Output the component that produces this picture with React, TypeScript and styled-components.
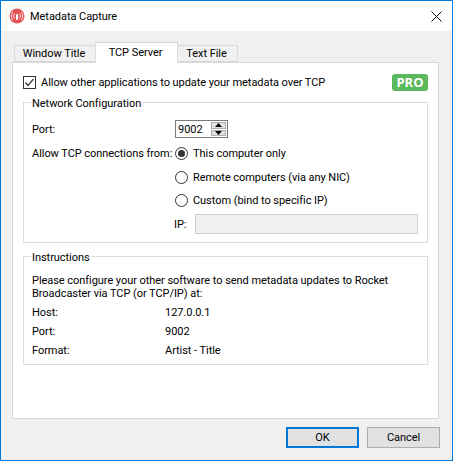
import React from 'react';
import styled, { createGlobalStyle } from 'styled-components';

const GlobalStyle = createGlobalStyle`
    html, body {
        margin: 0;
        padding: 0;
        background: #f0f0f0;
    }
    * {
        box-sizing: border-box;
    }
`;

const Window = styled.div`
    width: 453px;
    height: 461px;
    display: flex;
    flex-direction: column;
    border: 1px solid #0078d7;
    background: #f0f0f0;
    color: #000;
    font-family: Roboto, 'Noto Sans', sans-serif;
    font-size: 11px;
    letter-spacing: -0.05px;
    line-height: 16px;
    white-space: nowrap;
`;

const TitleBar = styled.div`
    height: 30px;
    flex: none;
    display: flex;
    align-items: center;
    background: #fff;
    padding-left: 8px;
`;

const AppIcon = styled.svg`
    width: 16px;
    height: 16px;
    flex: none;
`;

// Roboto sits about a pixel higher than the original system font
const Caption = styled.div`
    padding-top: 2px;
`;

const Title = styled(Caption)`
    margin-left: 5px;
`;

const CloseButton = styled.svg`
    width: 11px;
    height: 11px;
    margin-left: auto;
    margin-right: 10px;
`;

const Body = styled.div`
    flex: 1;
    display: flex;
    flex-direction: column;
    padding: 13px 13px 0 11px;
`;

const TabStrip = styled.div`
    display: flex;
    height: 18px;
    padding-left: 2px;
    position: relative;
    z-index: 1;
`;

const Tab = styled.div<{ $active?: boolean; $width: number }>`
    width: ${p => p.$width}px;
    height: ${p => (p.$active ? 21 : 17)}px;
    margin-top: ${p => (p.$active ? -2 : 1)}px;
    margin-left: ${p => (p.$active ? -1 : 0)}px;
    margin-right: ${p => (p.$active ? -1 : 0)}px;
    padding-right: 2px;
    display: flex;
    align-items: center;
    justify-content: center;
    background: ${p => (p.$active ? '#fff' : '#f0f0f0')};
    border: 1px solid #d9d9d9;
    border-bottom: ${p => (p.$active ? 'none' : '1px solid #d9d9d9')};
    z-index: ${p => (p.$active ? 2 : 1)};
`;

const Pane = styled.div`
    height: 357px;
    background: #fff;
    border: 1px solid #d9d9d9;
    padding: 12px 10px 0;
`;

const AllowRow = styled.div`
    display: flex;
    align-items: center;
    height: 14px;
    margin-bottom: 6px;
`;

const Checkbox = styled.svg`
    width: 13px;
    height: 13px;
    flex: none;
    margin-right: 5px;
`;

const ProBadge = styled.div`
    margin-left: auto;
    width: 36px;
    height: 17px;
    border-radius: 3px;
    background: #5cb85c;
    color: #fff;
    font-family: 'Open Sans', sans-serif;
    font-weight: 700;
    font-size: 13px;
    letter-spacing: 0;
    line-height: 17px;
    text-align: center;
`;

const GroupBox = styled.fieldset<{ $height: number }>`
    margin: 0 0 6px;
    padding: 0 9px 0 8px;
    height: ${p => p.$height}px;
    border: 1px solid #dcdcdc;
    min-width: 0;
`;

const Legend = styled.legend`
    padding: 2px 1px 0;
    margin-left: -1px;
    line-height: 13px;
`;

const FormRow = styled.div<{ $top: number; $height?: number }>`
    display: flex;
    align-items: center;
    height: ${p => p.$height ?? 16}px;
    margin-top: ${p => p.$top}px;
`;

const FieldLabel = styled(Caption)`
    width: 143px;
    flex: none;
`;

const SpinBox = styled.div`
    width: 53px;
    height: 18px;
    display: flex;
    align-items: center;
    justify-content: space-between;
    border: 1px solid #7a7a7a;
    padding: 0 1px 0 2px;
    background: #fff;
`;

const SpinButtons = styled.div`
    width: 15px;
    height: 14px;
    display: flex;
    flex-direction: column;
    gap: 1px;
`;

const SpinButton = styled.div`
    flex: 1;
    display: flex;
    align-items: center;
    justify-content: center;
    background: #e1e1e1;
    border: 1px solid #adadad;
`;

const Arrow = styled.svg`
    width: 7px;
    height: 4px;
`;

const Radio = styled.svg`
    width: 13px;
    height: 13px;
    flex: none;
    margin-right: 5px;
`;

const IpLabel = styled(Caption)`
    width: 163px;
    flex: none;
    padding-left: 142px;
`;

const IpInput = styled.div`
    flex: 1;
    height: 20px;
    background: #f0f0f0;
    border: 1px solid #d0d0d0;
`;

const Paragraph = styled.div`
    margin-top: 10px;
    line-height: 13px;
`;

const InfoRow = styled.div<{ $top: number }>`
    display: flex;
    height: 16px;
    padding-top: 1px;
    margin-top: ${p => p.$top}px;
`;

const InfoLabel = styled.div`
    width: 133px;
    flex: none;
`;

const Footer = styled.div`
    display: flex;
    justify-content: flex-end;
    gap: 8px;
    padding-top: 8px;
    margin-right: -1px;
`;

const Button = styled.div<{ $primary?: boolean }>`
    width: 73px;
    height: 21px;
    display: flex;
    align-items: center;
    justify-content: center;
    background: #e1e1e1;
    border: ${p => (p.$primary ? '2px solid #0078d7' : '1px solid #adadad')};
`;

const RadioIcon = ({ checked }: { checked?: boolean }) => (
    <Radio viewBox="0 0 13 13">
        <circle cx="6.5" cy="6.5" r="6" fill="#fff" stroke="#333" />
        {checked && <circle cx="6.5" cy="6.5" r="3.5" fill="#333" />}
    </Radio>
);

export default function App() {
    return (
        <Window>
            <GlobalStyle />
            <TitleBar>
                <AppIcon viewBox="0 0 16 16">
                    <circle cx="8" cy="8" r="7.5" fill="#e25555" />
                    <rect x="7" y="6" width="2" height="6" rx="1" fill="#fff" />
                    <path
                        d="M5.6 5.6a3.4 3.4 0 0 0 0 4.8M10.4 5.6a3.4 3.4 0 0 1 0 4.8M3.8 4a6 6 0 0 0 0 8M12.2 4a6 6 0 0 1 0 8"
                        stroke="#fbdcdc"
                        strokeWidth="1"
                        fill="none"
                    />
                </AppIcon>
                <Title>Metadata Capture</Title>
                <CloseButton viewBox="0 0 11 11">
                    <path d="M0.5 0.5L10.5 10.5M10.5 0.5L0.5 10.5" stroke="#000" strokeWidth="1" fill="none" />
                </CloseButton>
            </TitleBar>
            <Body>
                <TabStrip>
                    <Tab $width={82}>Window Title</Tab>
                    <Tab $active $width={83}>TCP Server</Tab>
                    <Tab $width={61}>Text File</Tab>
                </TabStrip>
                <Pane>
                    <AllowRow>
                        <Checkbox viewBox="0 0 13 13">
                            <rect x="0.5" y="0.5" width="12" height="12" fill="#fff" stroke="#333" />
                            <path d="M2.5 6.5L5 9.5L10.5 3" stroke="#333" strokeWidth="1.2" fill="none" />
                        </Checkbox>
                        <Caption>Allow other applications to update your metadata over TCP</Caption>
                        <ProBadge>PRO</ProBadge>
                    </AllowRow>
                    <GroupBox $height={148}>
                        <Legend>Network Configuration</Legend>
                        <FormRow $top={11}>
                            <FieldLabel>Port:</FieldLabel>
                            <SpinBox>
                                <Caption>9002</Caption>
                                <SpinButtons>
                                    <SpinButton>
                                        <Arrow viewBox="0 0 7 4"><path d="M3.5 0L7 4H0z" fill="#000" /></Arrow>
                                    </SpinButton>
                                    <SpinButton>
                                        <Arrow viewBox="0 0 7 4"><path d="M0 0H7L3.5 4z" fill="#000" /></Arrow>
                                    </SpinButton>
                                </SpinButtons>
                            </SpinBox>
                        </FormRow>
                        <FormRow $top={8}>
                            <FieldLabel>Allow TCP connections from:</FieldLabel>
                            <RadioIcon checked />
                            <Caption>This computer only</Caption>
                        </FormRow>
                        <FormRow $top={8}>
                            <FieldLabel />
                            <RadioIcon />
                            <Caption>Remote computers (via any NIC)</Caption>
                        </FormRow>
                        <FormRow $top={7}>
                            <FieldLabel />
                            <RadioIcon />
                            <Caption>Custom (bind to specific IP)</Caption>
                        </FormRow>
                        <FormRow $top={6} $height={20}>
                            <IpLabel>IP:</IpLabel>
                            <IpInput />
                        </FormRow>
                    </GroupBox>
                    <GroupBox $height={116}>
                        <Legend>Instructions</Legend>
                        <Paragraph>
                            Please configure your other software to send metadata updates to Rocket
                            <br />
                            Broadcaster via TCP (or TCP/IP) at:
                        </Paragraph>
                        <InfoRow $top={4}><InfoLabel>Host:</InfoLabel>127.0.0.1</InfoRow>
                        <InfoRow $top={3}><InfoLabel>Port:</InfoLabel>9002</InfoRow>
                        <InfoRow $top={3}><InfoLabel>Format:</InfoLabel>Artist - Title</InfoRow>
                    </GroupBox>
                </Pane>
                <Footer>
                    <Button $primary>OK</Button>
                    <Button>Cancel</Button>
                </Footer>
            </Body>
        </Window>
    );
}
